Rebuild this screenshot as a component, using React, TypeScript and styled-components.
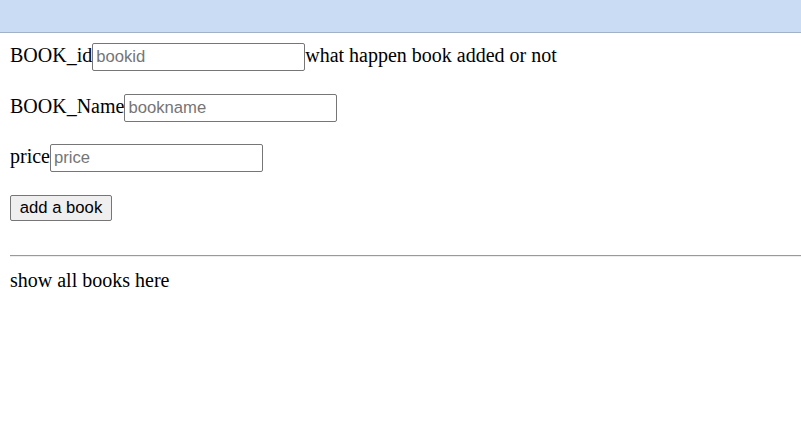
import React from "react";
import styled, { createGlobalStyle } from "styled-components";

const GlobalStyle = createGlobalStyle`
  html, body {
    margin: 0;
    padding: 0;
    background: #fff;
  }
  body {
    font-family: "Liberation Serif", "Times New Roman", serif;
    font-size: 20px;
    color: #000;
    overflow-x: hidden;
  }
`;

const TopBar = styled.div`
  height: 32px;
  background: #cadcf4;
  border-bottom: 1px solid #a3b1c6;
`;

const Content = styled.div`
  padding: 10px 0 0 10px;
`;

const Form = styled.form`
  display: flex;
  flex-direction: column;
  gap: 22.67px;
`;

const Row = styled.div`
  display: flex;
  align-items: baseline;
  height: 28px;
  white-space: nowrap;
`;

const Label = styled.span`
  font-size: 20px;
`;

const TextInput = styled.input`
  box-sizing: border-box;
  width: 213px;
  height: 28px;
  margin: 0;
  padding: 1px 3px;
  font-family: "Liberation Sans", Arial, sans-serif;
  font-size: 16.67px;
  color: #000;
  background: #fff;
  border: 1px solid #767676;
  border-radius: 2px;
  outline: none;

  &::placeholder {
    color: #757575;
  }
`;

const Status = styled.span`
  font-size: 20px;
`;

const AddButton = styled.button`
  align-self: flex-start;
  box-sizing: border-box;
  height: 26px;
  width: 102px;
  margin: 0;
  padding: 0 8px;
  font-family: "Liberation Sans", Arial, sans-serif;
  font-size: 16.67px;
  color: #000;
  background: #efefef;
  border: 1px solid #767676;
  border-radius: 2px;
`;

const Divider = styled.hr`
  margin: 34px 0 0 0;
  height: 0;
  border: none;
  border-top: 1px solid #9a9a9a;
  border-bottom: 1px solid #eeeeee;
`;

const BookList = styled.div`
  margin-top: 12px;
  font-size: 20px;
`;

export default function App() {
  return (
    <>
      <GlobalStyle />
      <TopBar />
      <Content>
        <Form onSubmit={(e) => e.preventDefault()}>
          <Row>
            <Label>BOOK_id</Label>
            <TextInput type="text" placeholder="bookid" />
            <Status>what happen book added or not</Status>
          </Row>
          <Row>
            <Label>BOOK_Name</Label>
            <TextInput type="text" placeholder="bookname" />
          </Row>
          <Row>
            <Label>price</Label>
            <TextInput type="text" placeholder="price" />
          </Row>
          <AddButton type="submit">add a book</AddButton>
        </Form>
        <Divider />
        <BookList>show all books here</BookList>
      </Content>
    </>
  );
}
